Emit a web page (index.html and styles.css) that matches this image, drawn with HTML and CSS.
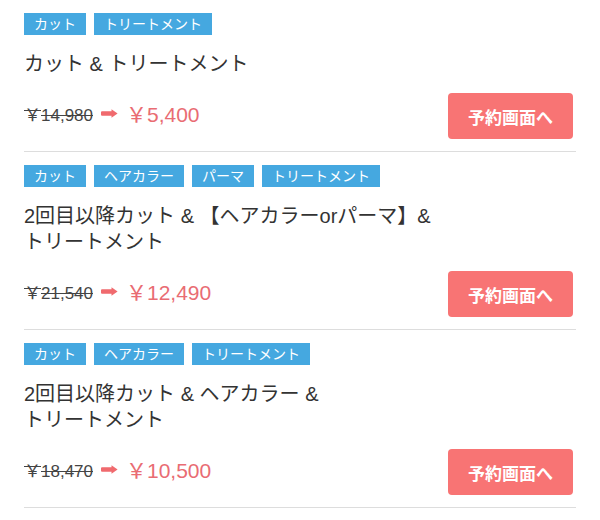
FILE: index.html
```html
<!DOCTYPE html>
<html lang="ja">
<head>
  <meta charset="utf-8">
  <title>メニュー</title>
  <link rel="stylesheet" href="styles.css">
</head>
<body>

<div class="menu-list">

  <!-- menu 1 -->
  <div class="menu-item">
    <div class="tags">
      <span class="tag">カット</span>
      <span class="tag">トリートメント</span>
    </div>
    <div class="menu-title">カット &amp; トリートメント</div>
    <div class="price-row">
      <div class="price">
        <span class="price-old"><span class="yen">￥</span>14,980</span>
        <svg class="price-arrow" width="17" height="9" viewBox="0 0 17 9"><path d="M1 2.2H10.5V0.3L16.6 4.5L10.5 8.7V6.8H1Q0 6.8 0 5.8V3.2Q0 2.2 1 2.2Z"/></svg>
        <span class="price-new"><span class="yen">￥</span>5,400</span>
      </div>
      <a class="reserve-btn" href="#">予約画面へ</a>
    </div>
  </div>

  <!-- menu 2 -->
  <div class="menu-item">
    <div class="tags">
      <span class="tag">カット</span>
      <span class="tag">ヘアカラー</span>
      <span class="tag">パーマ</span>
      <span class="tag">トリートメント</span>
    </div>
    <div class="menu-title">2回目以降カット &amp; 【ヘアカラーorパーマ】&amp;<br>トリートメント</div>
    <div class="price-row">
      <div class="price">
        <span class="price-old"><span class="yen">￥</span>21,540</span>
        <svg class="price-arrow" width="17" height="9" viewBox="0 0 17 9"><path d="M1 2.2H10.5V0.3L16.6 4.5L10.5 8.7V6.8H1Q0 6.8 0 5.8V3.2Q0 2.2 1 2.2Z"/></svg>
        <span class="price-new"><span class="yen">￥</span>12,490</span>
      </div>
      <a class="reserve-btn" href="#">予約画面へ</a>
    </div>
  </div>

  <!-- menu 3 -->
  <div class="menu-item">
    <div class="tags">
      <span class="tag">カット</span>
      <span class="tag">ヘアカラー</span>
      <span class="tag">トリートメント</span>
    </div>
    <div class="menu-title">2回目以降カット &amp; ヘアカラー &amp;<br>トリートメント</div>
    <div class="price-row">
      <div class="price">
        <span class="price-old"><span class="yen">￥</span>18,470</span>
        <svg class="price-arrow" width="17" height="9" viewBox="0 0 17 9"><path d="M1 2.2H10.5V0.3L16.6 4.5L10.5 8.7V6.8H1Q0 6.8 0 5.8V3.2Q0 2.2 1 2.2Z"/></svg>
        <span class="price-new"><span class="yen">￥</span>10,500</span>
      </div>
      <a class="reserve-btn" href="#">予約画面へ</a>
    </div>
  </div>

</div>

</body>
</html>
```

FILE: styles.css
```css
/* page */
body {
  margin: 0;
  background-color: #ffffff;
  font-family: "Liberation Sans", "Noto Sans CJK JP", sans-serif;
  color: #333333;
}

.menu-list {
  padding: 0 24px;
}

/* one menu block */
.menu-item {
  padding: 13px 0 12px;
  border-bottom: 1px solid #dddddd;
}

/* tags */
.tags {
  display: flex;
  gap: 8px;
  margin-bottom: 16px;
}

.tag {
  height: 22px;
  line-height: 22px;
  padding: 0 10px;
  font-size: 14px;
  color: #ffffff;
  background-color: #45a8e0;
}

/* title */
.menu-title {
  font-size: 20px;
  line-height: 26px;
  margin-bottom: 16px;
}

/* price + button */
.price-row {
  display: flex;
  justify-content: space-between;
  align-items: center;
}

.price {
  display: flex;
  align-items: center;
  margin-bottom: 6px;
}

.yen {
  font-family: "Noto Sans CJK JP", sans-serif;
}

.price-old {
  font-size: 17px;
  color: #444444;
  text-decoration: line-through;
}

.price-arrow {
  fill: #f06a6e;
  margin: 1px 8px 0 8px;
}

.price-new {
  font-size: 21px;
  color: #e96c73;
}

.reserve-btn {
  display: flex;
  align-items: center;
  justify-content: center;
  width: 125px;
  height: 46px;
  margin-right: 3px;
  border-radius: 4px;
  background-color: #f87474;
  color: #ffffff;
  font-size: 17px;
  font-weight: bold;
  text-decoration: none;
}
```
